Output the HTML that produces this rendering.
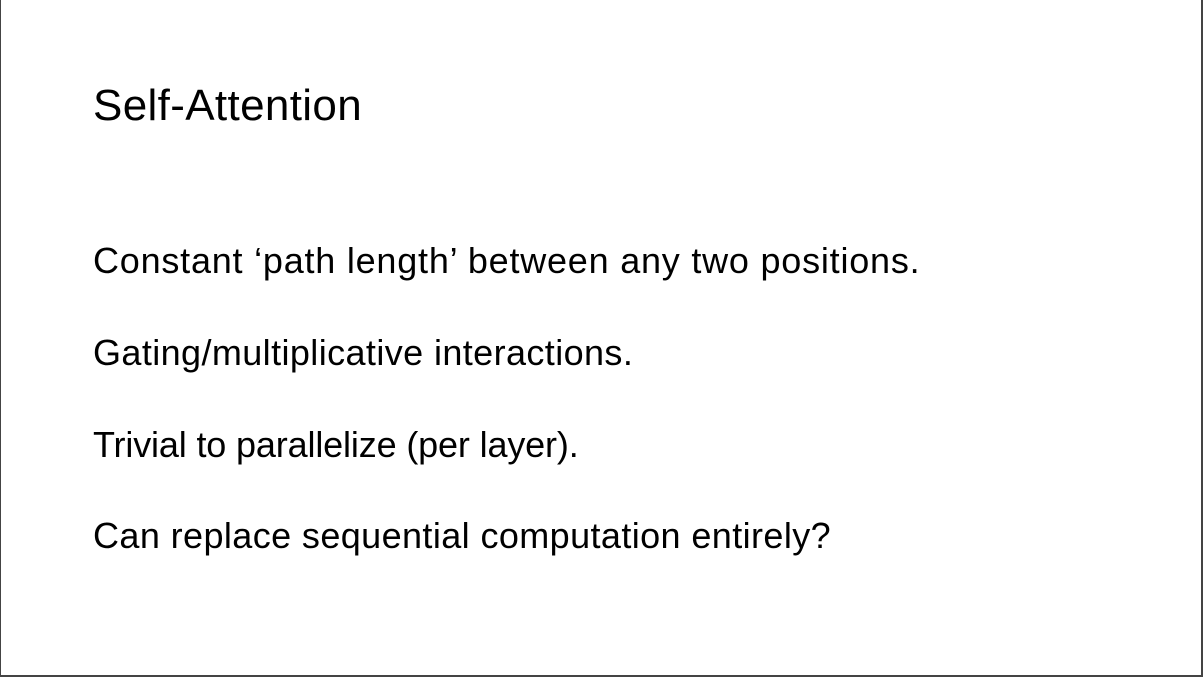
<!DOCTYPE html>
<html><head><meta charset="utf-8"><style>
html,body{margin:0;padding:0;background:#fff;}
body{width:1203px;height:677px;position:relative;overflow:hidden;font-family:"Liberation Sans",sans-serif;color:#000;}
.frame{position:absolute;left:0;top:-2px;width:1200px;height:677px;border-left:1px solid #444;border-right:2px solid #444;border-bottom:2px solid #444;}
.t{position:absolute;left:93px;white-space:nowrap;}
.h{font-size:44px;line-height:44px;top:84px;letter-spacing:0.35px;}
.b{font-size:36px;line-height:36px;}
</style></head><body>
<div class="frame"></div>
<div class="t h">Self-Attention</div>
<div class="t b" style="top:243px;letter-spacing:0.78px">Constant ‘path length’ between any two positions.</div>
<div class="t b" style="top:335px;letter-spacing:0.4px">Gating/multiplicative interactions.</div>
<div class="t b" style="top:427px;letter-spacing:-0.15px">Trivial to parallelize (per layer).</div>
<div class="t b" style="top:518px;letter-spacing:0.4px">Can replace sequential computation entirely?</div>
</body></html>
